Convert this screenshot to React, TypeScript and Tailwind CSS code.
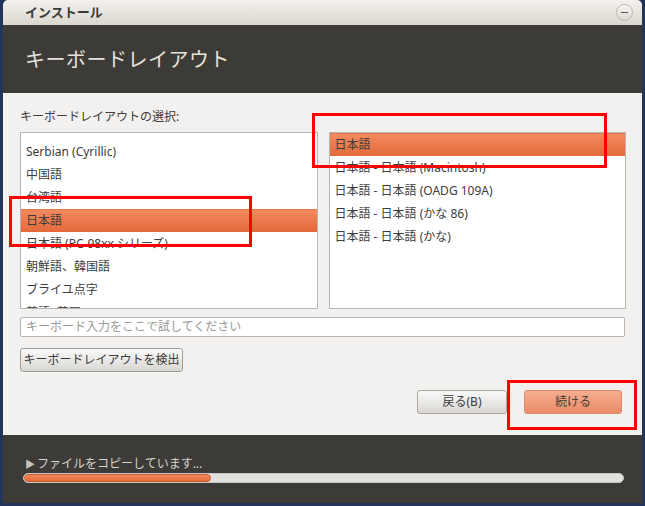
/**
 * App.tsx
 * Ubuntu installer -- keyboard layout step, with red annotation boxes.
 */

import React from 'react';

const FONT = '"Noto Sans", "Noto Sans CJK JP", sans-serif';

const leftItems = [
  'Serbian (Cyrillic)',
  '中国語',
  '台湾語',
  '日本語',
  '日本語 (PC-98xx シリーズ)',
  '朝鮮語、韓国語',
  'ブライユ点字',
  '英語 (英国)',
];

const rightItems = [
  '日本語',
  '日本語 - 日本語 (Macintosh)',
  '日本語 - 日本語 (OADG 109A)',
  '日本語 - 日本語 (かな 86)',
  '日本語 - 日本語 (かな)',
];

function ListRow({ label, selected }: { label: string; selected?: boolean }) {
  return (
    <div
      className={`h-[23px] shrink-0 flex items-center text-[12px] text-[#3c3c3c] whitespace-nowrap ${
        selected
          ? 'bg-gradient-to-b from-[#f28a5e] to-[#e4693a] border-t border-[#e27a50] px-[5px]'
          : 'px-[5px]'
      }`}
    >
      {label}
    </div>
  );
}

function ListBox({ items, selected, padTop }: { items: string[]; selected: number; padTop: string }) {
  return (
    <div className={`flex-1 h-[177px] bg-white border border-[#b9b6b1] overflow-hidden flex flex-col ${padTop}`}>
      {items.map((it, i) => (
        <ListRow key={i} label={it} selected={i === selected} />
      ))}
    </div>
  );
}

function RedBox({ className }: { className: string }) {
  return <div className={`absolute border-[3px] border-[#ff0000] pointer-events-none ${className}`} />;
}

export default function App() {
  return (
    <div className="relative w-[645px] h-[506px] bg-[#22345a] overflow-hidden" style={{ fontFamily: FONT }}>
      <div className="ml-[3px] w-[639px] h-[503px] flex flex-col rounded-t-[5px] overflow-hidden">
        {/* title bar */}
        <div className="h-[25px] shrink-0 flex items-center justify-between pl-[22px] pr-[9px] bg-gradient-to-b from-[#f3f1ee] to-[#dcd6ce]">
          <span className="text-[13px] font-bold text-[#3c3b37] leading-none">インストール</span>
          <div className="w-[17px] h-[17px] rounded-full border border-[#bdb7ae] bg-gradient-to-b from-[#f7f5f2] to-[#ddd8d1] flex items-center justify-center">
            <div className="w-[7px] h-[1.5px] bg-[#5d5952]" />
          </div>
        </div>

        {/* header */}
        <div className="h-[68px] shrink-0 bg-[#3c3b37] pl-[22px] pt-[21px]">
          <h1 className="text-[20px] leading-[28px] text-[#e6e2da] tracking-[0.5px]">キーボードレイアウト</h1>
        </div>

        {/* body */}
        <div className="flex-1 bg-[#f2f1f0] pl-[17px] pr-[16px] pt-[16px] flex flex-col">
          <p className="text-[12px] leading-[16px] text-[#3c3c3c]">キーボードレイアウトの選択:</p>
          <div className="mt-[7px] flex gap-[11px]">
            <ListBox items={leftItems} selected={3} padTop="pt-[7px]" />
            <ListBox items={rightItems} selected={0} padTop="pt-0" />
          </div>
          <div className="mt-[8px] h-[20px] bg-white border border-[#b9b6b1] rounded-[2px] flex items-center px-[5px] mr-[1px]">
            <span className="text-[12px] text-[#9a9894]">キーボード入力をここで試してください</span>
          </div>
          <div className="mt-[9px]">
            <button className="h-[24px] w-[163px] rounded-[3px] border border-[#9f9c97] bg-gradient-to-b from-[#fafafa] to-[#d9d7d3] text-[12px] text-[#3c3c3c] shadow-[0_1px_0_rgba(255,255,255,0.6)]">
              キーボードレイアウトを検出
            </button>
          </div>
          <div className="mt-[18px] flex justify-end gap-[17px] pr-[4px]">
            <button className="h-[24px] w-[90px] rounded-[3px] border border-[#a8a5a0] bg-gradient-to-b from-[#fafafa] to-[#d9d7d3] text-[12px] text-[#3c3c3c]">
              戻る(B)
            </button>
            <button className="h-[24px] w-[98px] rounded-[3px] border border-[#d88a6c] bg-gradient-to-b from-[#f5ad90] to-[#ea8c68] text-[12px] text-[#4a3a34]">
              続ける
            </button>
          </div>
        </div>

        {/* footer */}
        <div className="h-[68px] shrink-0 bg-[#3c3b37] pl-[22px] pr-[18px] pt-[21px]">
          <div className="flex items-center gap-[2px] text-[12px] leading-[16px] text-[#d8d4cc]">
            <span className="text-[10px] text-[#c8c4bc]">▶</span>
            <span>ファイルをコピーしています...</span>
          </div>
          <div className="mt-[1px] -ml-[2px] h-[10px] rounded-full bg-[#e2e1df] border border-[#c9c7c3] overflow-hidden">
            <div className="h-full w-[187px] rounded-full bg-gradient-to-b from-[#f48a5c] to-[#e36a38] border border-[#c85a2c]" />
          </div>
        </div>
      </div>

      {/* annotations */}
      <RedBox className="left-[312px] top-[113px] w-[295px] h-[55px]" />
      <RedBox className="left-[9px] top-[196px] w-[243px] h-[51px]" />
      <RedBox className="left-[507px] top-[380px] w-[130px] h-[50px]" />
    </div>
  );
}
